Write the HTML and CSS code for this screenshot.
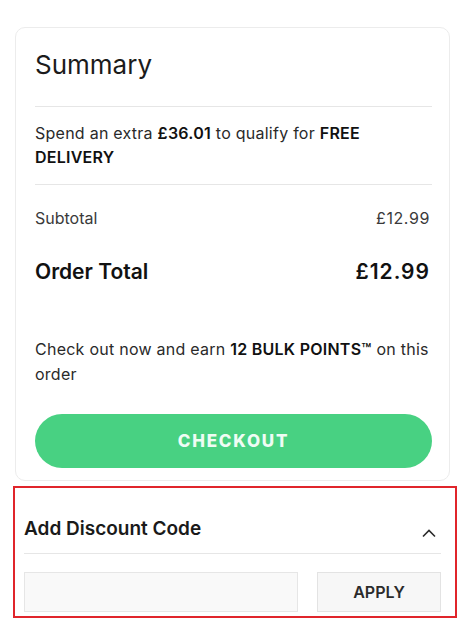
FILE: index.html
```html
<!DOCTYPE html>
<html lang="en">
<head>
    <meta charset="UTF-8">
    <meta name="viewport" content="width=device-width, initial-scale=1.0">
    <title>Summary</title>
    <link rel="stylesheet" href="styles.css">
</head>
<body>
  <div class="page">
    <div class="summary-card">
      <h2 class="summary-title">Summary</h2>
      <p class="delivery-msg">Spend an extra <b>£36.01</b> to qualify for <b>FREE DELIVERY</b></p>
      <div class="totals">
        <div class="row subtotal">
          <span>Subtotal</span>
          <span>£12.99</span>
        </div>
        <div class="row order-total">
          <span>Order Total</span>
          <span>£12.99</span>
        </div>
      </div>
      <p class="points-msg">Check out now and earn <b>12 BULK POINTS&trade;</b> on this order</p>
      <button class="checkout-btn">CHECKOUT</button>
    </div>

    <div class="discount">
      <div class="discount-head">
        <h3>Add Discount Code</h3>
        <svg class="chevron" width="16" height="10" viewBox="0 0 16 10">
          <path d="M2 8.5 L8 2.5 L14 8.5" fill="none" stroke="#2b2b2b" stroke-width="1.6"/>
        </svg>
      </div>
      <div class="discount-form">
        <input type="text" class="code-input">
        <button class="apply-btn">APPLY</button>
      </div>
    </div>
  </div>
</body>
</html>
```

FILE: styles.css
```css
*{
  margin: 0;
  padding: 0;
  box-sizing: border-box;
}

body{
  background: #fff;
  color: #1b1b1b;
  font-family: Inter, Lato, sans-serif;
}

.page{
  padding: 27px 0 0 13px;
  width: 457px;
}

.summary-card{
  margin-left: 2px;
  width: 435px;
  border: 1px solid #ececec;
  border-radius: 10px;
  padding: 0 17px 12px 19px;
}

.summary-title{
  font-size: 26px;
  font-weight: 400;
  line-height: 32px;
  padding-top: 21px;
  padding-bottom: 25px;
  border-bottom: 1px solid #e6e6e6;
}

.delivery-msg{
  font-size: 16px;
  line-height: 24px;
  letter-spacing: 0.25px;
  padding: 14px 0 15px;
  border-bottom: 1px solid #e6e6e6;
  color: #2a2a2a;
}

.delivery-msg b, .points-msg b{
  font-weight: 600;
  color: #111;
}

.totals{
  padding-top: 21px;
  padding-right: 2px;
}

.row{
  display: flex;
  justify-content: space-between;
  align-items: center;
}

.subtotal{
  font-size: 16px;
  line-height: 24px;
  color: #3a3a3a;
}

.subtotal span:last-child{
  letter-spacing: 0.6px;
}

.order-total{
  margin-top: 28px;
  font-size: 21px;
  line-height: 28px;
  font-weight: 600;
  color: #111;
}

.order-total span:last-child{
  letter-spacing: 1px;
}

.points-msg{
  margin-top: 51px;
  font-size: 16px;
  line-height: 25px;
  letter-spacing: 0.25px;
  color: #2a2a2a;
}

.checkout-btn{
  display: block;
  width: 100%;
  height: 54px;
  margin-top: 27px;
  border: none;
  border-radius: 27px;
  background-color: #48d182;
  color: #effcf4;
  font-family: inherit;
  font-size: 17px;
  font-weight: 800;
  letter-spacing: 1.8px;
  cursor: pointer;
}

.discount{
  margin-top: 5px;
  border: 2px solid #e0252b;
  padding: 29px 14px 4px 9px;
}

.discount-head{
  display: flex;
  justify-content: space-between;
  align-items: center;
  padding-bottom: 12px;
  border-bottom: 1px solid #e6e6e6;
}

.discount-head h3{
  font-size: 19px;
  line-height: 24px;
  font-weight: 600;
  color: #1a1a1a;
}

.chevron{
  margin-top: 8px;
  margin-right: 4px;
}

.discount-form{
  display: flex;
  column-gap: 19px;
  margin-top: 18px;
}

.code-input{
  flex: 1;
  height: 40px;
  border: 1px solid #e6e6e6;
  background: #f9f9f9;
}

.apply-btn{
  width: 124px;
  height: 40px;
  border: 1px solid #e3e3e3;
  background: #f7f7f7;
  color: #2b2b2b;
  font-family: inherit;
  font-size: 16px;
  font-weight: 600;
  cursor: pointer;
}
```
